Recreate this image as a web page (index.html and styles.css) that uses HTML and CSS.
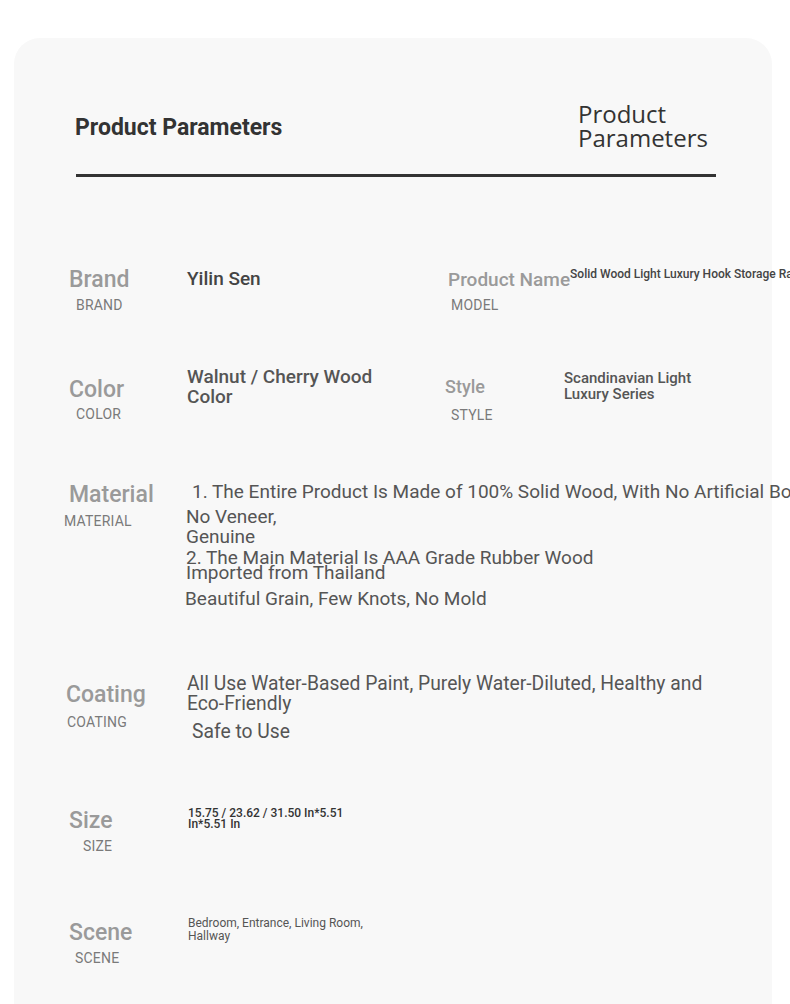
FILE: index.html
```html
<!DOCTYPE html>
<html lang="en">
<head>
<meta charset="utf-8">
<title>Product Parameters</title>
<link rel="stylesheet" href="styles.css">
</head>
<body>
<div class="card">
  <div class="head">
    <div class="title">Product Parameters</div>
    <div class="title-en">Product<br>Parameters</div>
  </div>
  <div class="rule"></div>

  <div class="row row-brand">
    <div class="pair pair-left">
      <div class="lab">
        <div class="lab-main">Brand</div>
        <div class="lab-sub sub-brand">BRAND</div>
      </div>
      <div class="val val-brand">Yilin Sen</div>
    </div>
    <div class="pair">
      <div class="lab lab-name">
        <div class="lab-main lab-main-sm">Product Name</div>
        <div class="lab-sub sub-model">MODEL</div>
      </div>
      <div class="val val-xs">Solid Wood Light Luxury Hook Storage Rack</div>
    </div>
  </div>

  <div class="row row-color">
    <div class="pair pair-left">
      <div class="lab lab-color">
        <div class="lab-main">Color</div>
        <div class="lab-sub sub-color">COLOR</div>
      </div>
      <div class="val val-color">Walnut / Cherry Wood<br>Color</div>
    </div>
    <div class="pair">
      <div class="lab lab-style">
        <div class="lab-main lab-main-style">Style</div>
        <div class="lab-sub sub-style">STYLE</div>
      </div>
      <div class="val val-style">Scandinavian Light<br>Luxury Series</div>
    </div>
  </div>

  <div class="row row-material">
    <div class="lab lab-material">
      <div class="lab-main">Material</div>
      <div class="lab-sub sub-material">MATERIAL</div>
    </div>
    <div class="val val-material">
      <div class="m-line1">1. The Entire Product Is Made of 100% Solid Wood, With No Artificial Board</div>
      <div class="m-line2">No Veneer,<br>Genuine</div>
      <div class="m-line3">2. The Main Material Is AAA Grade Rubber Wood<br>Imported from Thailand</div>
      <div class="m-line4">Beautiful Grain, Few Knots, No Mold</div>
    </div>
  </div>

  <div class="row row-coating">
    <div class="lab lab-coating">
      <div class="lab-main">Coating</div>
      <div class="lab-sub sub-coating">COATING</div>
    </div>
    <div class="val val-coating">
      <div class="c-line1">All Use Water-Based Paint, Purely Water-Diluted, Healthy and<br>Eco-Friendly</div>
      <div class="c-line2">Safe to Use</div>
    </div>
  </div>

  <div class="row row-size">
    <div class="lab lab-size">
      <div class="lab-main">Size</div>
      <div class="lab-sub sub-size">SIZE</div>
    </div>
    <div class="val val-size">15.75 / 23.62 / 31.50 In*5.51<br>In*5.51 In</div>
  </div>

  <div class="row row-scene">
    <div class="lab lab-scene">
      <div class="lab-main">Scene</div>
      <div class="lab-sub sub-scene">SCENE</div>
    </div>
    <div class="val val-scene">Bedroom, Entrance, Living Room,<br>Hallway</div>
  </div>
</div>
</body>
</html>
```
FILE: styles.css
```css
html, body {
  margin: 0;
  padding: 0;
  background: #ffffff;
}
body {
  width: 790px;
  height: 1004px;
  overflow: hidden;
  font-family: Roboto, "Liberation Sans", sans-serif;
}
.card {
  margin: 38px 0 0 14px;
  width: 758px;
  height: 1000px;
  box-sizing: border-box;
  padding-top: 64px;
  background: #f8f8f8;
  border-radius: 26px 26px 0 0;
}
.head {
  display: grid;
  grid-template-columns: 503px auto;
  align-items: center;
  height: 48px;
  padding-left: 61px;
}
.title {
  font-family: Roboto, sans-serif;
  font-weight: 700;
  font-size: 23px;
  line-height: 26px;
  color: #333;
  padding-top: 4px;
}
.title-en {
  font-family: "Open Sans", sans-serif;
  font-weight: 400;
  font-size: 24px;
  line-height: 24px;
  color: #333;
}
.rule {
  margin: 24px 0 0 62px;
  width: 640px;
  height: 3px;
  background: #333;
}
.row {
  display: flex;
  align-items: flex-start;
  padding-left: 55px;
  white-space: nowrap;
}
.row-brand { margin-top: 90px; height: 100px; }
.row-color { height: 114px; }
.row-material { height: 193px; }
.row-coating { height: 134px; }
.row-size { height: 109px; }
.row-scene { height: 80px; }

.pair {
  display: flex;
  align-items: flex-start;
}
.pair-left { width: 379px; flex: none; }

.lab { width: 118px; flex: none; }
.lab-main {
  font-size: 23px;
  line-height: 26px;
  font-weight: 500;
  color: #9a9a9a;
}
.lab-main-sm { font-size: 19px; }
.lab-main-style { font-size: 18px; line-height: 22px; }
.lab-sub {
  font-size: 14px;
  line-height: 16px;
  color: #7a7a7a;
  letter-spacing: 0.2px;
}
.sub-brand { margin: 4px 0 0 7px; }
.sub-model { margin: 4px 0 0 3px; }
.lab-name { width: auto; }

.lab-color { margin-top: 10px; }
.sub-color { margin: 3px 0 0 7px; }
.lab-style { margin: 9px 0 0 -3px; width: 119px; }
.sub-style { margin: 9px 0 0 6px; }

.lab-material { margin-top: 1px; width: 117px; }
.sub-material { margin: 5px 0 0 -5px; }

.lab-coating { margin: 8px 0 0 -3px; width: 121px; }
.sub-coating { margin: 6px 0 0 1px; }

.lab-size { width: 119px; }
.sub-size { margin: 4px 0 0 14px; }

.lab-scene { margin-top: 3px; width: 119px; }
.sub-scene { margin: 4px 0 0 6px; }

.val { color: #444; }
.val-brand {
  margin-top: 1px;
  font-size: 19px;
  line-height: 22px;
  font-weight: 500;
}
.val-xs {
  font-size: 12px;
  line-height: 14px;
  font-weight: 500;
}
.val-color {
  font-size: 19px;
  line-height: 20px;
  font-weight: 500;
  color: #555;
}
.val-style {
  margin-top: 3px;
  font-size: 15px;
  line-height: 16px;
  font-weight: 500;
  color: #555;
}
.val-material {
  font-size: 19px;
  color: #555;
}
.m-line1 { line-height: 22px; margin-left: 6px; }
.m-line2 { line-height: 20px; margin-top: 4px; }
.m-line3 { line-height: 15px; margin-top: 3px; }
.m-line4 { line-height: 22px; margin-top: 8px; margin-left: -1px; }

.val-coating {
  font-size: 19.3px;
  color: #555;
}
.c-line1 { line-height: 20px; }
.c-line2 { line-height: 22px; margin: 7px 0 0 5px; }

.val-size {
  font-size: 12px;
  line-height: 11px;
  font-weight: 500;
  color: #333;
}
.val-scene {
  font-size: 12px;
  line-height: 13px;
  color: #555;
}
```
